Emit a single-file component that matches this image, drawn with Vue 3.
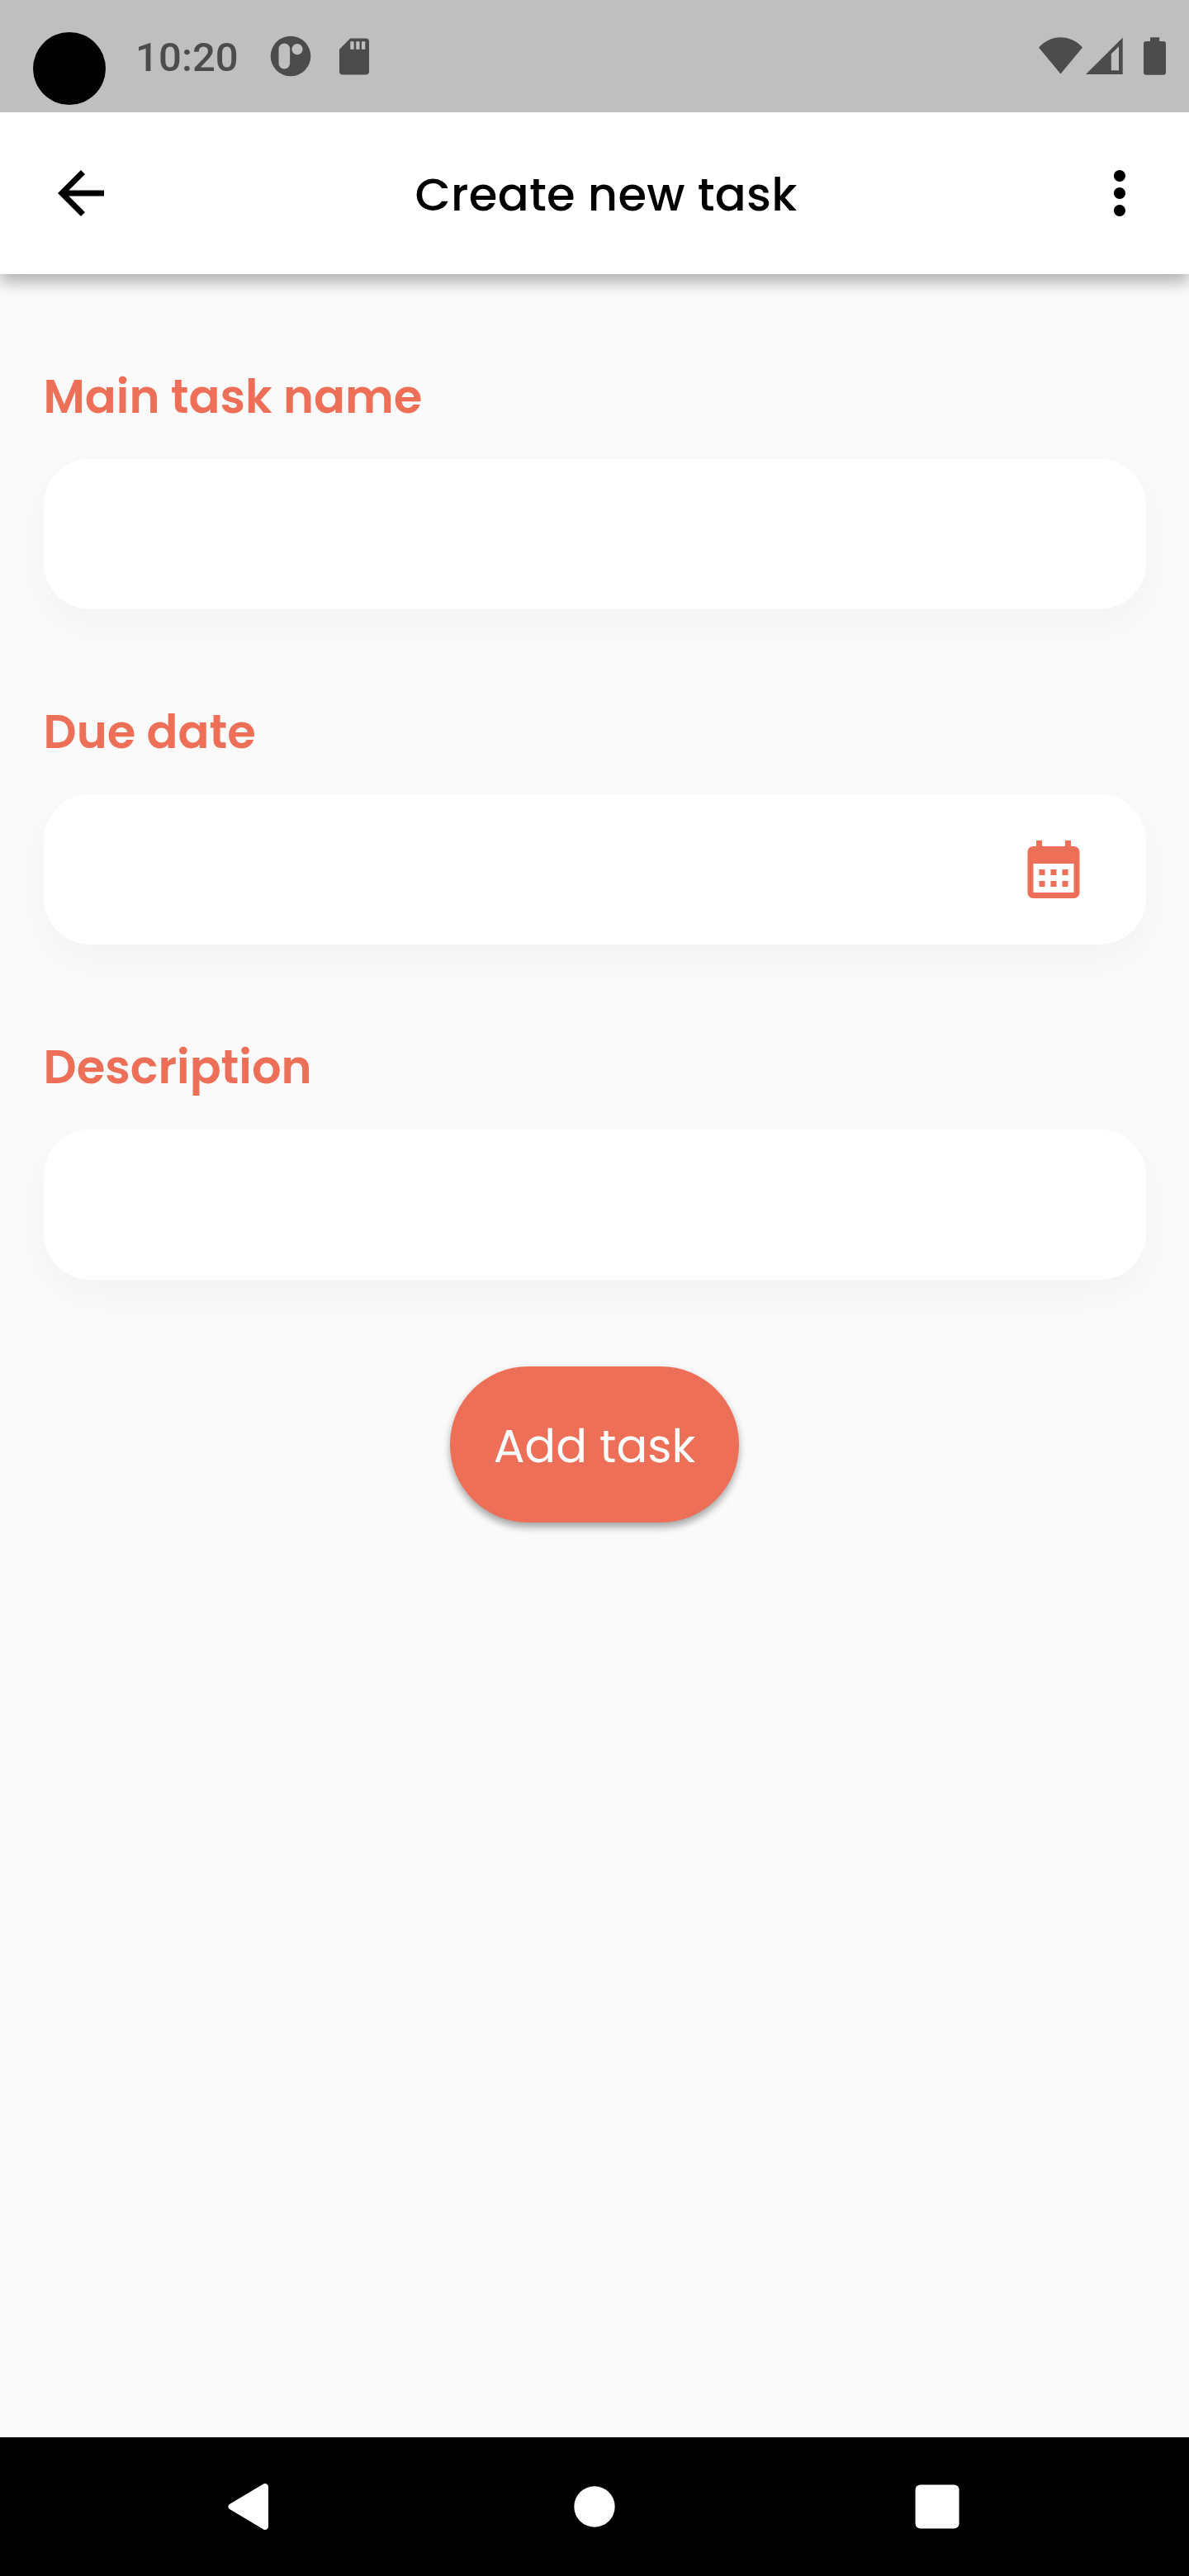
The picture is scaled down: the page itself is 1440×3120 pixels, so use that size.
<script setup>
const fields = [
  { id: 'name', label: 'Main task name' },
  { id: 'due', label: 'Due date', icon: true },
  { id: 'description', label: 'Description' },
]
</script>

<template>
  <div class="screen">
    <div class="status">
      <span class="camera"></span>
      <span class="clock">10:20</span>
      <svg class="badge-icon" viewBox="0 0 50 50">
        <path
          fill-rule="evenodd"
          d="M25 .7a24.3 24.3 0 1 0 0 48.6a24.3 24.3 0 1 0 0-48.6zM17.3 9.6a6.8 6.8 0 0 1 6.8 6.8v17.2a6.8 6.8 0 0 1-13.6 0V16.4a6.8 6.8 0 0 1 6.8-6.8zM33 10.1a6.6 6.6 0 1 1 0 13.2a6.6 6.6 0 1 1 0-13.2z"
        />
      </svg>
      <svg class="sd-icon" viewBox="0 0 36 45">
        <path
          fill-rule="evenodd"
          d="M13.2.4H32a4 4 0 0 1 4 4v36a4 4 0 0 1-4 4H4a4 4 0 0 1-4-4V13.8zM13.3 4.3v9.4h4.3V4.3zM20.3 4.3v9.4h4.2V4.3zM27 4.3v9.4h4.3V4.3z"
        />
      </svg>
      <span class="spacer"></span>
      <svg class="wifi-icon" viewBox="0 0 53 45">
        <path d="M0 12.4C7 5 16 .3 26.5.3S46 5 53 12.4L26.5 44.6z" />
      </svg>
      <svg class="signal-icon" viewBox="0 0 45 45">
        <path fill-rule="evenodd" d="M0 45L44.7.6V45zM30.8 20.3V40.2H40V11.2z" />
      </svg>
      <svg class="battery-icon" viewBox="0 0 27 46">
        <path
          d="M8 .2h11.2V5H24a3 3 0 0 1 3 3v34.8a3 3 0 0 1-3 3H3a3 3 0 0 1-3-3V8a3 3 0 0 1 3-3h5z"
        />
      </svg>
    </div>

    <header class="appbar">
      <svg class="action" viewBox="0 0 24 24">
        <path d="M20 11H7.83l5.59-5.59L12 4l-8 8 8 8 1.41-1.41L7.83 13H20v-2z" />
      </svg>
      <h1 class="title">Create new task</h1>
      <svg class="action" viewBox="0 0 24 24">
        <path
          d="M12 8c1.1 0 2-.9 2-2s-.9-2-2-2-2 .9-2 2 .9 2 2 2zm0 2c-1.1 0-2 .9-2 2s.9 2 2 2 2-.9 2-2-.9-2-2-2zm0 6c-1.1 0-2 .9-2 2s.9 2 2 2 2-.9 2-2-.9-2-2-2z"
        />
      </svg>
    </header>

    <main class="form">
      <div v-for="f in fields" :key="f.id" class="field">
        <label class="label" :for="f.id">{{ f.label }}</label>
        <div class="box">
          <input :id="f.id" class="input" type="text" />
          <svg v-if="f.icon" class="calendar" viewBox="0 0 24 24">
            <path
              d="M19 4h-1V2h-2v2H8V2H6v2H5c-1.11 0-1.99.9-1.99 2L3 20c0 1.1.89 2 2 2h14c1.1 0 2-.9 2-2V6c0-1.1-.9-2-2-2zm0 16H5V10h14v10zM9 14H7v-2h2v2zm4 0h-2v-2h2v2zm4 0h-2v-2h2v2zm-8 4H7v-2h2v2zm4 0h-2v-2h2v2zm4 0h-2v-2h2v2z"
            />
          </svg>
        </div>
      </div>
      <button class="add" type="button">Add task</button>
    </main>

    <nav class="nav">
      <svg class="nav-icon" viewBox="0 0 60 60">
        <path d="M50 6v48a4 4 0 0 1-6 3.4L3 33a3.5 3.5 0 0 1 0-6L44 2.6A4 4 0 0 1 50 6z" />
      </svg>
      <svg class="nav-icon" viewBox="0 0 60 60"><circle cx="30" cy="30" r="24.7" /></svg>
      <svg class="nav-icon" viewBox="0 0 60 60">
        <rect x="3.6" y="3.4" width="53" height="53" rx="6" />
      </svg>
    </nav>
  </div>
</template>

<style>
body {
  margin: 0;
}
</style>

<style scoped>
.screen {
  box-sizing: border-box;
  width: 1440px;
  height: 3120px;
  display: flex;
  flex-direction: column;
  background: #fafafa;
  font-family: Poppins, Inter, 'Open Sans', sans-serif;
  overflow: hidden;
}
.screen svg {
  display: block;
  flex: none;
}
.status {
  box-sizing: border-box;
  height: 136px;
  flex: none;
  display: flex;
  align-items: flex-start;
  padding: 0 28px 0 40px;
  background: #bfbfbf;
  fill: #4c4c4c;
  position: relative;
  z-index: 1;
}
.camera {
  width: 88px;
  height: 88px;
  margin-top: 39px;
  border-radius: 50%;
  background: #000;
}
.clock {
  width: 125px;
  margin: 41px 0 0 36px;
  font: 500 49px/57px Roboto, sans-serif;
  letter-spacing: 0.1px;
  color: #4c4c4c;
  white-space: nowrap;
}
.badge-icon {
  width: 50px;
  height: 50px;
  margin: 43.3px 0 0 38.3px;
}
.sd-icon {
  width: 36px;
  height: 45px;
  margin: 46px 0 0 34.2px;
}
.spacer {
  flex: 1;
}
.wifi-icon {
  width: 53px;
  height: 45px;
  margin-top: 45px;
}
.signal-icon {
  width: 45px;
  height: 45px;
  margin: 45px 0 0 4px;
}
.battery-icon {
  width: 27px;
  height: 46px;
  margin: 45px 0 0 25px;
}
.appbar {
  box-sizing: border-box;
  height: 196px;
  flex: none;
  display: flex;
  align-items: center;
  justify-content: space-between;
  padding: 0 42px 0 56px;
  background: #fff;
  box-shadow: 0 10px 17px rgba(0, 0, 0, 0.27), 0 3.5px 35px rgba(0, 0, 0, 0.04);
}
.action {
  width: 84px;
  height: 84px;
}
.title {
  margin: 4px 0 0 14px;
  font-size: 56px;
  font-weight: 500;
  line-height: 78px;
  letter-spacing: 0.3px;
  white-space: nowrap;
  color: #000;
}
.form {
  flex: 1;
  display: flex;
  flex-direction: column;
  align-items: center;
  padding: 105px 52.5px 0;
}
.field {
  width: 100%;
  height: 406px;
  flex: none;
}
.label {
  display: block;
  height: 119px;
  font-size: 56px;
  font-weight: 600;
  line-height: 87px;
  white-space: nowrap;
  color: #ed6f58;
}
.box {
  box-sizing: border-box;
  height: 182px;
  display: flex;
  align-items: center;
  padding-right: 70px;
  border-radius: 56px;
  background: #fff;
  box-shadow: 0 17.5px 52.5px rgba(20, 0, 10, 0.03);
}
.input {
  flex: 1;
  min-width: 0;
  height: 100%;
  box-sizing: border-box;
  padding: 0 56px;
  border: 0;
  outline: 0;
  background: transparent;
  font: inherit;
  font-size: 56px;
}
.calendar {
  width: 84px;
  height: 84px;
  fill: #ed6f58;
}
.add {
  width: 350px;
  height: 189px;
  padding: 4px 0 0;
  border: 0;
  border-radius: 95px;
  background: #ed6f58;
  color: #fff;
  font-family: inherit;
  font-size: 56px;
  font-weight: 400;
  line-height: 80px;
  white-space: nowrap;
  box-shadow: 0 6px 9px rgba(0, 0, 0, 0.3), 0 3px 14px rgba(0, 0, 0, 0.05);
}
.nav {
  box-sizing: border-box;
  height: 168px;
  flex: none;
  display: flex;
  align-items: center;
  justify-content: space-between;
  padding: 0 275px;
  background: #000;
  fill: #fff;
}
.nav-icon {
  width: 60px;
  height: 60px;
}
</style>
